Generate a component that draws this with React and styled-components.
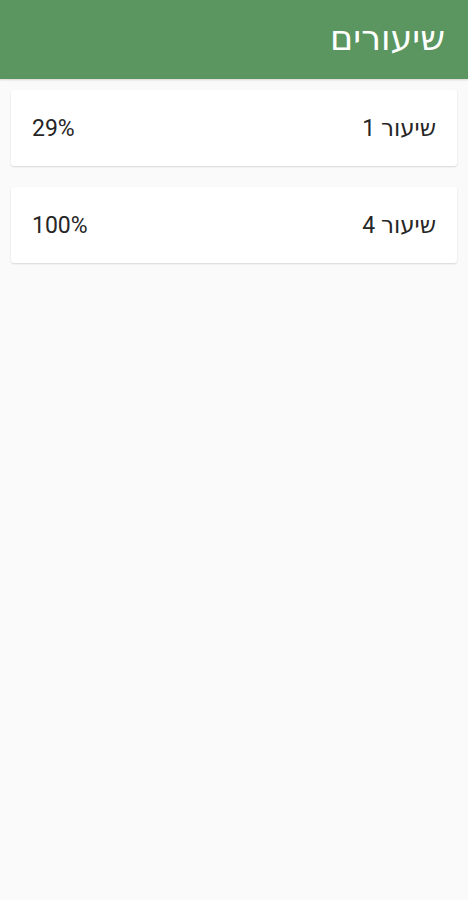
import styled, { createGlobalStyle } from 'styled-components'

const GlobalStyle = createGlobalStyle`
  html, body {
    margin: 0;
    padding: 0;
    background: #fafafa;
    font-family: Roboto, "Noto Sans", "DejaVu Sans", sans-serif;
  }
`

const Screen = styled.div`
  direction: rtl;
  min-height: 900px;
  background: #fafafa;
`

const Header = styled.header`
  height: 79px;
  background: #5b9660;
  display: flex;
  align-items: center;
  padding: 0 23px 2px;
  box-sizing: border-box;
  box-shadow: 0 1px 2px rgba(0, 0, 0, 0.15);
`

const Title = styled.h1`
  margin: 0;
  color: #fff;
  font-size: 35px;
  font-weight: 400;
`

const List = styled.div`
  display: flex;
  flex-direction: column;
  gap: 21px;
  padding: 11px 11px;
`

const Card = styled.div`
  height: 76px;
  display: flex;
  align-items: center;
  justify-content: space-between;
  padding: 0 21px;
  background: #fff;
  border-radius: 3px;
  box-shadow: 0 1px 2px rgba(0, 0, 0, 0.14);
`

const Label = styled.span`
  font-size: 23px;
  color: #262626;
`

const lessons = [
  { name: 'שיעור 1', progress: 29 },
  { name: 'שיעור 4', progress: 100 },
]

const App = () => (
  <>
    <GlobalStyle />
    <Screen>
      <Header>
        <Title>שיעורים</Title>
      </Header>
      <List>
        {lessons.map((lesson) => (
          <Card key={lesson.name}>
            <Label>{lesson.name}</Label>
            <Label dir="ltr">{lesson.progress}%</Label>
          </Card>
        ))}
      </List>
    </Screen>
  </>
)

export default App
